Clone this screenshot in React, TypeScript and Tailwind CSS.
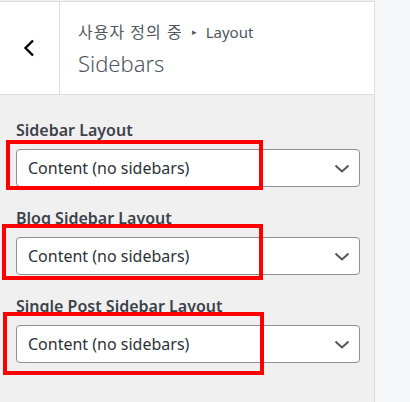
const FONT = { fontFamily: '"Noto Sans", "Noto Sans CJK KR", sans-serif' };

const FIELDS = ['Sidebar Layout', 'Blog Sidebar Layout', 'Single Post Sidebar Layout'];

function SelectBox() {
  return (
    <div className="flex h-[38px] items-center justify-between rounded-[4px] border border-[#8c8f94] bg-white pl-[11px] pr-[9px]">
      <span className="text-[16px] leading-[20px] text-[#2c3338]">Content (no sidebars)</span>
      <svg width="16" height="9" viewBox="0 0 16 9" fill="none">
        <path d="M1.5 1.5 L8 7.5 L14.5 1.5" stroke="#50575e" strokeWidth="2" />
      </svg>
    </div>
  );
}

export default function App() {
  return (
    <div className="relative flex h-[402px] w-[410px] overflow-hidden bg-[#f6f7f9]" style={FONT}>
      <div className="flex w-[375px] flex-col border-r border-[#dcdcde] bg-[#f0f0f1] pt-px">
        <div className="flex h-[94px] border-y border-[#dcdcde] bg-white">
          <div className="flex w-[60px] items-center justify-center border-r border-[#dcdcde] pr-[2px]">
            <svg width="12" height="18" viewBox="0 0 12 18" fill="none">
              <path d="M10 1.5 L2.5 9 L10 16.5" stroke="#000" strokeWidth="2.4" />
            </svg>
          </div>
          <div className="flex flex-col justify-center pl-[18px] pt-[2px]">
            <div className="flex items-center leading-[20px] text-[#50575e]">
              <span className="text-[16px] tracking-[1px]">사용자 정의 중</span>
              <span className="mx-[9px] text-[9px]">▸</span>
              <span className="text-[15px]">Layout</span>
            </div>
            <div className="mt-[7px] text-[22px] font-light leading-[28px] text-[#50575e]">Sidebars</div>
          </div>
        </div>
        <div className="flex flex-col gap-[20px] pl-[16px] pr-[14px] pt-[24px]">
          {FIELDS.map((f) => (
            <div key={f}>
              <div className="mb-[8px] text-[16px] font-semibold leading-[22px] text-[#3c434a]">{f}</div>
              <SelectBox />
            </div>
          ))}
        </div>
      </div>
      <div className="absolute left-[6px] top-[140px] h-[50px] w-[257px] border-4 border-[#ff0000]" />
      <div className="absolute left-[2px] top-[224px] h-[56px] w-[261px] border-4 border-[#ff0000]" />
      <div className="absolute left-[3px] top-[312px] h-[63px] w-[261px] border-4 border-[#ff0000]" />
    </div>
  );
}
